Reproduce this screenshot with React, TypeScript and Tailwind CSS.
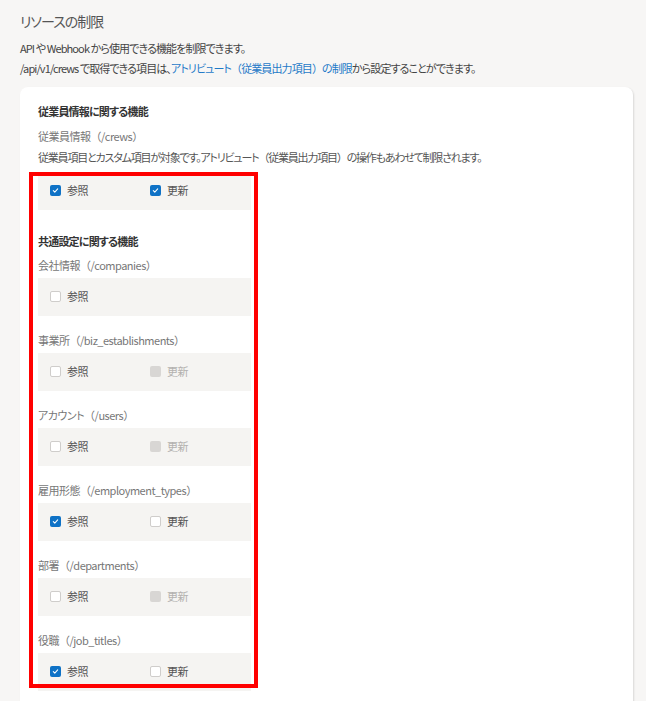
import React from "react";

type Perm = "on" | "off" | "disabled";

type Resource = {
  label: string;
  read: Perm;
  update?: Perm;
};

const common: Resource[] = [
  { label: "会社情報（/companies）", read: "off" },
  { label: "事業所（/biz_establishments）", read: "off", update: "disabled" },
  { label: "アカウント（/users）", read: "off", update: "disabled" },
  { label: "雇用形態（/employment_types）", read: "on", update: "off" },
  { label: "部署（/departments）", read: "off", update: "disabled" },
  { label: "役職（/job_titles）", read: "on", update: "off" },
];

// keep full-width parentheses wide while kana stay proportional
function Jp({ text }: { text: string }) {
  const parts = text.split(/([（）])/);
  return (
    <>
      {parts.map((p, i) =>
        p === "（" || p === "）" ? (
          <span key={i} className="[font-feature-settings:normal]">
            {p}
          </span>
        ) : (
          <React.Fragment key={i}>{p}</React.Fragment>
        )
      )}
    </>
  );
}

function Box({ state }: { state: Perm }) {
  if (state === "on") {
    return (
      <span className="flex h-[11px] w-[11px] items-center justify-center rounded-[2px] bg-[#0f72c6]">
        <svg width="7" height="7" viewBox="0 0 8 8" fill="none">
          <path d="M1.5 4.2 3.2 5.8 6.5 2.2" stroke="white" strokeWidth="1.2" strokeLinecap="round" strokeLinejoin="round" />
        </svg>
      </span>
    );
  }
  if (state === "disabled") {
    return <span className="h-[11px] w-[11px] rounded-[2px] bg-[#d8d6d4]" />;
  }
  return <span className="h-[11px] w-[11px] rounded-[2px] border border-[#cfcdcb] bg-white" />;
}

function Check({ state, text }: { state: Perm; text: string }) {
  return (
    <div className="flex h-5 w-[100px] items-center gap-[6px]">
      <Box state={state} />
      <span className={state === "disabled" ? "text-[#b3b1af]" : "text-[#555]"}>{text}</span>
    </div>
  );
}

function Row({ read, update }: { read: Perm; update?: Perm }) {
  return (
    <div className="flex w-[213px] bg-[#f5f4f2] pt-2 pb-[10px] pl-3">
      <Check state={read} text="参照" />
      {update && <Check state={update} text="更新" />}
    </div>
  );
}

export default function App() {
  return (
    <div
      className="relative min-h-screen bg-[#f7f6f5] pt-[11px] pl-5 pr-[13px] text-[11px] leading-5 tracking-[-0.5px] text-[#444] [font-feature-settings:'palt']"
      style={{ fontFamily: '"Noto Sans CJK JP", "Noto Sans", sans-serif' }}
    >
      <h1 className="text-[14px] leading-5 tracking-[-1px] text-[#555]">リソースの制限</h1>
      <div className="tracking-[-0.9px]">
        <p className="mt-[7px]">API や Webhook から使用できる機能を制限できます。</p>
        <p>
          /api/v1/crews で取得できる項目は、
          <span className="text-[#1f7ac8]">
            <Jp text="アトリビュート（従業員出力項目）の制限" />
          </span>
          から設定することができます。
        </p>
      </div>

      <div className="mt-[9px] h-[640px] rounded-lg bg-white pt-[14px] pl-[18px] shadow-[1px_1px_2px_rgba(0,0,0,0.12)]">
        <h2 className="font-bold tracking-[-0.8px] text-[#333]">従業員情報に関する機能</h2>
        <div className="mt-[5px] text-[#777]">
          <Jp text="従業員情報（/crews）" />
        </div>
        <div className="mt-px tracking-[-1.2px] text-[#555]">
          <Jp text="従業員項目とカスタム項目が対象です。アトリビュート（従業員出力項目）の操作もあわせて制限されます。" />
        </div>
        <div className="mt-[5px]">
          <Row read="on" update="on" />
        </div>

        <h2 className="mt-[21px] font-bold tracking-[-0.8px] text-[#333]">共通設定に関する機能</h2>
        {common.map((r, i) => (
          <div key={r.label} className={i === 0 ? "mt-1" : "mt-[14px]"}>
            <div className="text-[#777]">
              <Jp text={r.label} />
            </div>
            <div className="mt-[3px]">
              <Row read={r.read} update={r.update} />
            </div>
          </div>
        ))}
      </div>

      <div className="pointer-events-none absolute top-[172px] left-[29px] h-[516px] w-[229px] border-4 border-[#ff0000]" />
    </div>
  );
}
